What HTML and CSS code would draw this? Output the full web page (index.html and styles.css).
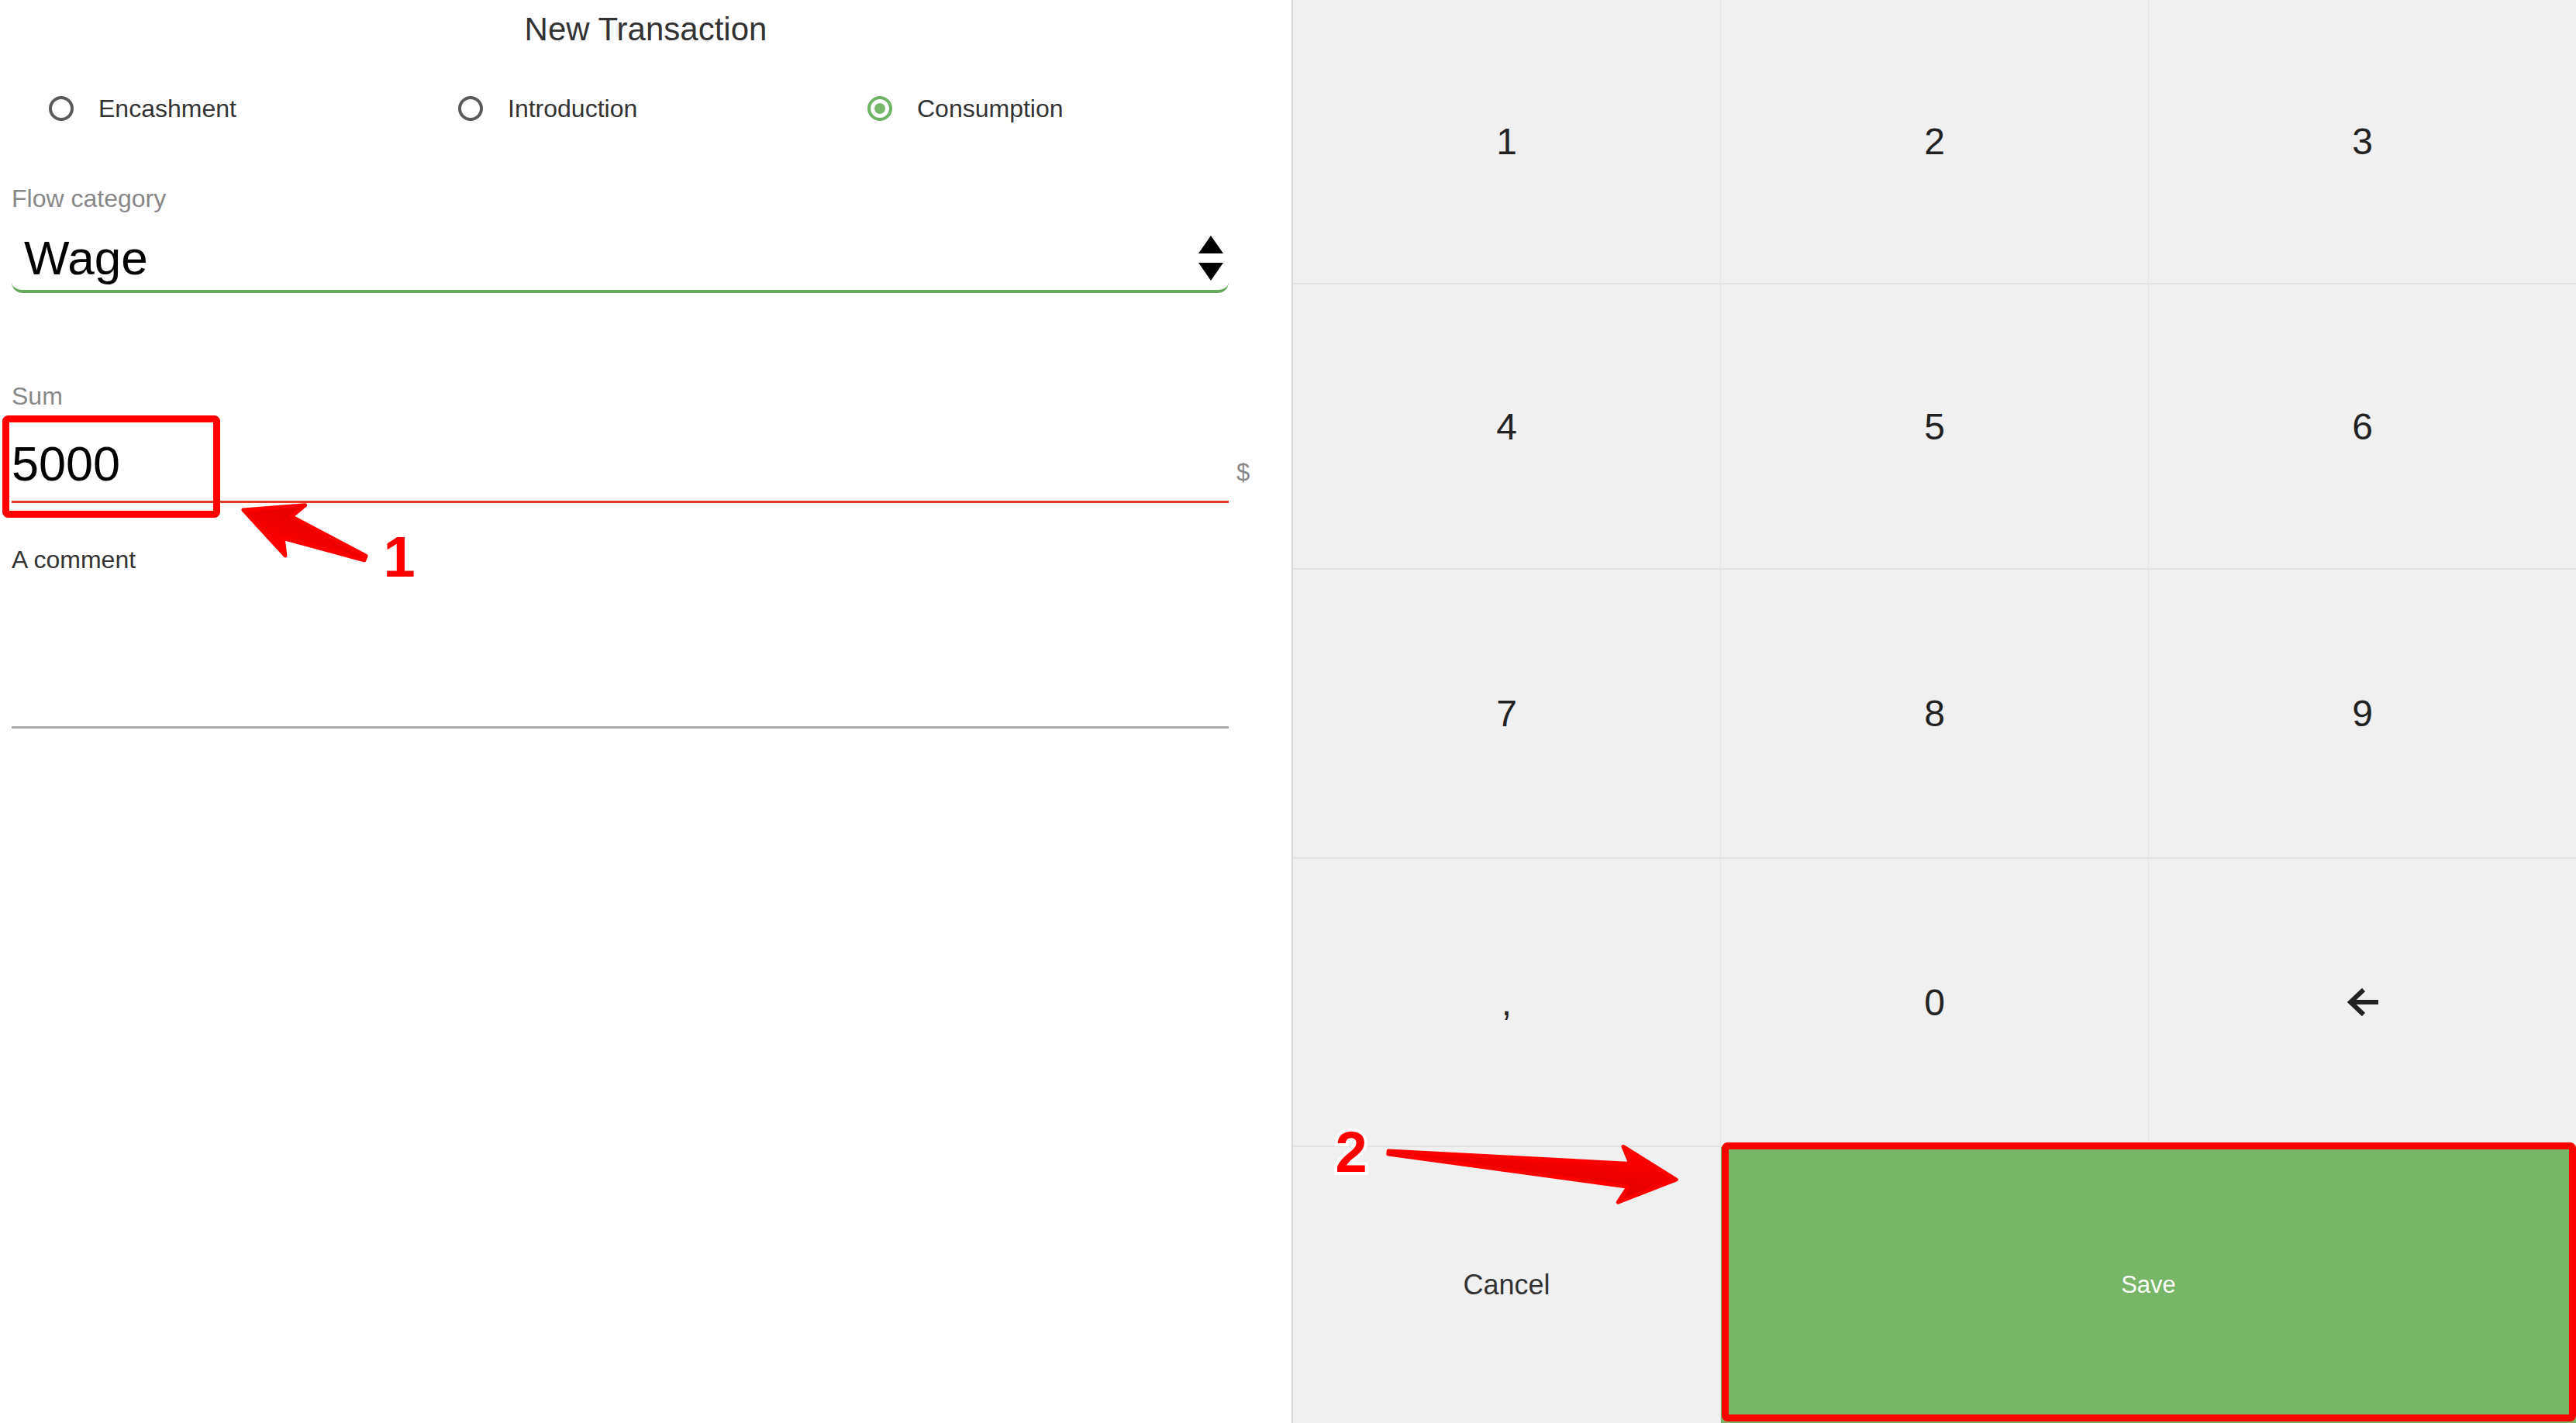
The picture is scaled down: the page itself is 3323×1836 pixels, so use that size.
FILE: index.html
```html
<!DOCTYPE html>
<html lang="en">
<head>
  <meta charset="UTF-8" />
  <title>New Transaction</title>
  <meta name="viewport" content="width=device-width, initial-scale=1.0"/>
  <link rel="stylesheet" href="styles.css">
</head>
<body>

<div class="page">
  <div class="form">
    <h1 class="title">New Transaction</h1>

    <div class="radios">
      <label class="radio"><span class="dot"></span>Encashment</label>
      <label class="radio"><span class="dot"></span>Introduction</label>
      <label class="radio checked"><span class="dot"></span>Consumption</label>
    </div>

    <div class="label label-flow">Flow category</div>
    <div class="select">
      <span>Wage</span>
      <svg class="updown" width="32" height="58" viewBox="0 0 32 58">
        <polygon points="16,0 32,23 0,23" fill="#000"/>
        <polygon points="0,35 32,35 16,58" fill="#000"/>
      </svg>
    </div>

    <div class="label label-sum">Sum</div>
    <div class="amount-row">
      <div class="amount">5000</div>
      <span class="suffix">$</span>
    </div>

    <div class="label label-comment">A comment</div>
    <div class="comment"></div>
  </div>

  <div class="keypad">
    <div class="key">1</div>
    <div class="key">2</div>
    <div class="key">3</div>
    <div class="key">4</div>
    <div class="key">5</div>
    <div class="key">6</div>
    <div class="key">7</div>
    <div class="key">8</div>
    <div class="key">9</div>
    <div class="key">,</div>
    <div class="key">0</div>
    <div class="key">
      <svg width="40" height="36" viewBox="0 0 40 36">
        <path d="M40 18 H5 M21 2 L4 18 L21 34" fill="none" stroke="#222" stroke-width="6"/>
      </svg>
    </div>
    <div class="key cancel">Cancel</div>
    <div class="key save">Save</div>
  </div>

  <!-- annotations drawn on top of the screenshot -->
  <svg class="notes" width="3323" height="1836" viewBox="0 0 3323 1836">
    <defs>
      <linearGradient id="red" x1="0" y1="0" x2="0" y2="1">
        <stop offset="0" stop-color="#ff0000"/>
        <stop offset="1" stop-color="#e00000"/>
      </linearGradient>
    </defs>
    <rect x="7.5" y="540.5" width="272" height="123" rx="3" fill="none" stroke="#ff0000" stroke-width="9"/>
    <rect x="2225.5" y="1478.5" width="1093" height="351" rx="3" fill="none" stroke="#ff0000" stroke-width="9"/>

    <g transform="translate(471 720) rotate(201.55)">
      <polygon points="0,-3 108,-15 97,-35 169,0 97,35 108,15 0,3" fill="url(#red)" stroke="#f00" stroke-width="5" stroke-linejoin="round"/>
    </g>
    <g transform="translate(1791 1487) rotate(5.39)">
      <polygon points="0,-2 312,-15 301,-36 373,0 301,36 312,15 0,2" fill="url(#red)" stroke="#f00" stroke-width="5" stroke-linejoin="round"/>
    </g>

    <text class="num" x="515" y="744">1</text>
    <text class="num" x="1743" y="1512">2</text>
  </svg>
</div>

</body>
</html>
```

FILE: styles.css
```css
body { margin: 0; font-family: "Liberation Sans", Arial, sans-serif; background: #fff; }
.page { position: relative; display: flex; width: 3323px; height: 1836px; overflow: hidden; }

.form { width: 1570px; padding: 0 81px 0 15px; border-right: 2px solid #d6d6d6; flex-shrink: 0; }
.title { margin: 0 -81px 0 -15px; padding-top: 14px; font-size: 42px; line-height: 48px; font-weight: normal; color: #333; text-align: center; }

.radios { display: grid; grid-template-columns: 528px 528px 528px; margin-top: 58px; padding-left: 48px; }
.radio { display: flex; align-items: center; gap: 32px; font-size: 32px; line-height: 40px; color: #333; }
.dot { width: 32px; height: 32px; box-sizing: border-box; border: 4px solid #5a5a5a; border-radius: 50%; display: flex; align-items: center; justify-content: center; }
.radio.checked .dot { border-color: #6db565; }
.radio.checked .dot:after { content: ""; width: 14px; height: 14px; border-radius: 50%; background: #78b86a; }

.label { font-size: 32px; line-height: 40px; color: #888; }
.label-flow { margin-top: 76px; }
.label-sum { margin-top: 113px; }
.label-comment { margin-top: 53px; color: #333; }

.select { display: flex; align-items: center; justify-content: space-between; padding: 21px 7px 5px 16px; font-size: 62px; line-height: 72px; color: #000; border-bottom: 4px solid #66aa5c; border-radius: 0 0 14px 14px; }
.updown { display: block; }

.amount-row { display: flex; align-items: baseline; margin-right: -36px; }
.amount { flex: 1; padding: 31px 0 12px; font-size: 63px; line-height: 72px; color: #000; border-bottom: 3px solid #e8392b; }
.suffix { width: 26px; padding-left: 10px; font-size: 31px; color: #888; }

.comment { height: 195px; border-bottom: 3px solid #aaa; }

.keypad { flex: 1; display: grid; grid-template-columns: 552px 552px 1fr; grid-template-rows: 367px 368px 373px 372px 1fr; background: #f0f0f0; }
.key { display: flex; align-items: center; justify-content: center; font-size: 48px; color: #222; border-right: 1px solid #e3e3e3; border-bottom: 2px solid #e3e3e3; }
.key:nth-child(3n) { border-right: none; }
.key.cancel { font-size: 36px; color: #333; border-bottom: none; }
.key.save { grid-column: span 2; font-size: 31px; color: #fff; background: #77b667; border: none; }

.notes { position: absolute; top: 0; left: 0; pointer-events: none; }
.num { font-family: "Liberation Sans", Arial, sans-serif; font-weight: bold; font-size: 74px; fill: #ff0000; stroke: #fff; stroke-width: 8px; paint-order: stroke; text-anchor: middle; }
```
